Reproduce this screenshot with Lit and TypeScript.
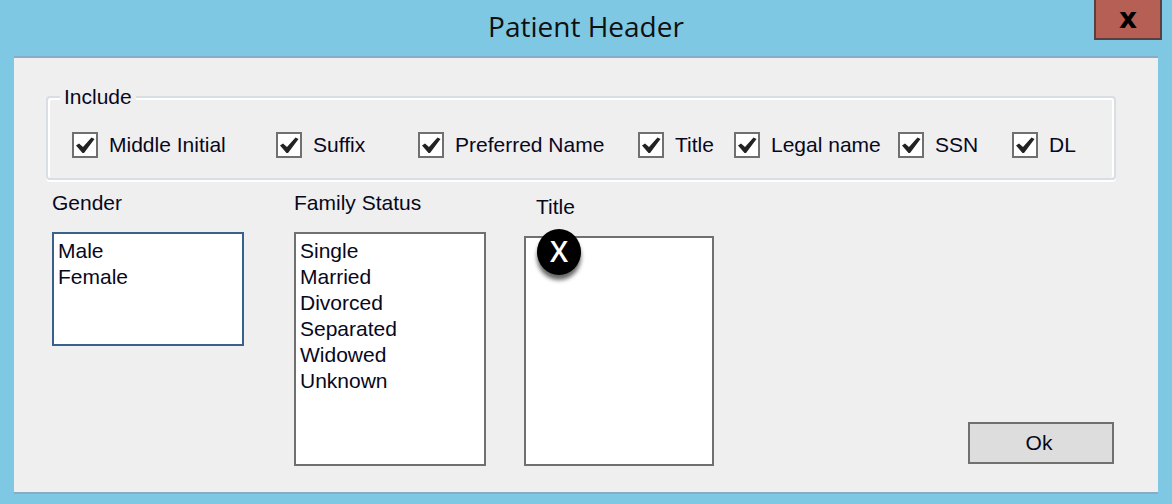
import { LitElement, html, css } from "lit";
import { customElement, property } from "lit/decorators.js";

const INCLUDE_OPTIONS = [
  "Middle Initial",
  "Suffix",
  "Preferred Name",
  "Title",
  "Legal name",
  "SSN",
  "DL",
];

const GENDERS = ["Male", "Female"];

const FAMILY_STATUSES = [
  "Single",
  "Married",
  "Divorced",
  "Separated",
  "Widowed",
  "Unknown",
];

@customElement("check-option")
export class CheckOption extends LitElement {
  @property() label = "";

  static styles = css`
    :host {
      display: flex;
    }
    .option {
      display: flex;
      align-items: center;
      gap: 11px;
      white-space: nowrap;
    }
    .box {
      appearance: none;
      flex: none;
      box-sizing: border-box;
      width: 26px;
      height: 26px;
      margin: 0;
      border: 2px solid #707070;
      border-radius: 0;
      background: #fff;
    }
    .box:checked {
      background: #fff
        url("data:image/svg+xml,%3Csvg xmlns='http://www.w3.org/2000/svg' viewBox='0 0 22 22'%3E%3Cpath d='M2 11.5L5 9.5L9 13L17.5 3.5L20.5 5L10 19H8.5Z' fill='%23222'/%3E%3C/svg%3E")
        center / 22px 22px no-repeat;
    }
  `;

  render() {
    return html`
      <label class="option">
        <input class="box" type="checkbox" checked />
        <span>${this.label}</span>
      </label>
    `;
  }
}

@customElement("app-root")
export class AppRoot extends LitElement {
  static styles = css`
    :host {
      display: flex;
      flex-direction: column;
      box-sizing: border-box;
      min-height: 100vh;
      padding-bottom: 10px;
      background: #7ec8e4;
      color: #08081c;
      font: 21px/26px "Liberation Sans", Arial, sans-serif;
    }
    .titlebar {
      display: grid;
      grid-template-columns: 1fr auto 1fr;
      align-items: center;
      height: 56px;
      padding: 0 10px;
    }
    .caption {
      grid-column: 2;
      margin: 0;
      padding-bottom: 4px;
      color: #101010;
      font: 400 28px/36px "Open Sans", "Noto Sans", sans-serif;
    }
    .close {
      grid-column: 3;
      justify-self: end;
      align-self: start;
      box-sizing: border-box;
      width: 68px;
      height: 40px;
      padding: 0;
      border: 2px solid #593f3f;
      border-top: 0;
      background: #b65f54;
      color: #000;
      font: 700 28px/32px "DejaVu Sans", sans-serif;
    }
    .client {
      flex: 1;
      margin: 0 14px;
      padding: 26px 42px 24px 32px;
      border: solid #87abc8;
      border-width: 2px 0;
      background: #efefef;
    }
    .include {
      min-width: 0;
      margin: 0;
      padding: 22px 0 20px;
      border: 2px solid #d8dee4;
      border-radius: 4px;
      box-shadow: inset 2px 2px 0 #fff, inset -2px 0 0 #fff, 0 2px 0 #fff;
    }
    .legend {
      margin-left: 12px;
      padding: 0 4px;
      background: #efefef;
    }
    .options {
      display: grid;
      grid-template-columns: 204fr 142fr 220fr 96fr 164fr 114fr 102fr;
      padding-left: 24px;
    }
    .lower {
      display: flex;
      align-items: flex-start;
      padding: 10px 2px 0 6px;
    }
    .field {
      display: flex;
      flex-direction: column;
      gap: 16px;
      width: 192px;
    }
    .family {
      margin-left: 50px;
    }
    .titles {
      position: relative;
      margin-left: 38px;
      padding-top: 4px;
      width: 190px;
    }
    .titles .name {
      padding-left: 12px;
    }
    .list {
      box-sizing: border-box;
      width: 100%;
      height: 234px;
      margin: 0;
      padding: 4px;
      overflow: hidden;
      border: 2px solid #707070;
      border-radius: 0;
      outline: none;
      background: #fff;
      color: inherit;
      font: inherit;
    }
    .gender .list {
      height: 114px;
      border-color: #38618c;
    }
    .titles .list {
      height: 230px;
    }
    .item {
      min-height: 24px;
      padding: 1px 0;
    }
    .marker {
      position: absolute;
      top: 39px;
      left: 13px;
      width: 44px;
      height: 46px;
      border-radius: 50%;
      background: #000;
      box-shadow: 0 5px 4px rgba(0, 0, 0, 0.6);
      color: #fff;
      font: 600 29px/44px "Open Sans", sans-serif;
      text-align: center;
    }
    .ok {
      align-self: flex-end;
      box-sizing: border-box;
      width: 146px;
      height: 42px;
      margin: 0 0 2px auto;
      padding: 0 4px 0 0;
      border: 2px solid #707070;
      border-radius: 0;
      background: #ddd;
      color: inherit;
      font: inherit;
    }
  `;

  private list(id: string, items: string[]) {
    return html`
      <select class="list" id=${id} multiple>
        ${items.map((item) => html`<option class="item">${item}</option>`)}
      </select>
    `;
  }

  render() {
    return html`
      <header class="titlebar">
        <h1 class="caption">Patient Header</h1>
        <button class="close" type="button" aria-label="Close">x</button>
      </header>
      <main class="client">
        <fieldset class="include">
          <legend class="legend">Include</legend>
          <div class="options">
            ${INCLUDE_OPTIONS.map(
              (label) => html`<check-option .label=${label}></check-option>`
            )}
          </div>
        </fieldset>
        <div class="lower">
          <div class="field gender">
            <label class="name" for="gender">Gender</label>
            ${this.list("gender", GENDERS)}
          </div>
          <div class="field family">
            <label class="name" for="family">Family Status</label>
            ${this.list("family", FAMILY_STATUSES)}
          </div>
          <div class="field titles">
            <label class="name" for="title">Title</label>
            ${this.list("title", [])}
            <span class="marker">X</span>
          </div>
          <button class="ok" type="button">Ok</button>
        </div>
      </main>
    `;
  }
}
